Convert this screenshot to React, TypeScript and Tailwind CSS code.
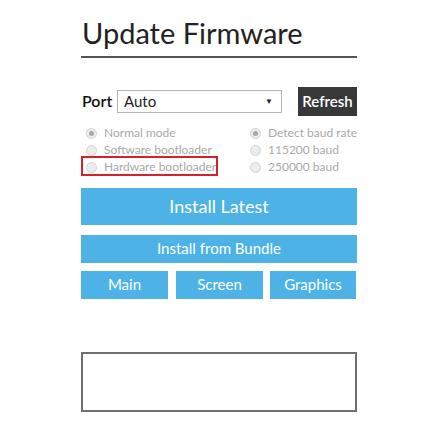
import React from "react";

function Radio({ label, checked }: { label: string; checked?: boolean }) {
  return (
    <div className="flex items-center h-[17px]">
      <span className="w-[11px] h-[11px] rounded-full border border-[#d4d4d4] bg-[#ececec] flex items-center justify-center">
        {checked && <span className="w-[5px] h-[5px] rounded-full bg-[#a8a8a8]" />}
      </span>
      <span className="ml-[7px] text-[12px] text-[#a9a9a9] leading-none whitespace-nowrap">{label}</span>
    </div>
  );
}

export default function App() {
  return (
    <div
      className="w-[444px] h-[444px] bg-white pl-[81px] pt-[14px]"
      style={{ fontFamily: 'Lato, "Open Sans", sans-serif' }}
    >
      <div className="w-[276px] flex flex-col">
        <h1 className="text-[29px] leading-[38px] text-[#222] pl-[1px]">Update Firmware</h1>
        <div className="h-[1.5px] bg-[#555] mt-[4px]" />

        {/* Port row */}
        <div className="flex items-center mt-[29px] h-[29px]">
          <span className="text-[16px] font-semibold text-[#111] w-[36px] pl-[1px]">Port</span>
          <div className="w-[165px] h-[23px] border border-[#b5b5b5] flex items-center justify-between px-[6px]">
            <span className="text-[15px] text-[#222]">Auto</span>
            <span className="text-[8px] text-[#222] mr-[2px]">▼</span>
          </div>
          <button className="ml-auto w-[59px] h-[29px] bg-[#383838] text-white text-[15px] font-semibold">Refresh</button>
        </div>

        {/* Mode / baud options */}
        <div className="flex mt-[9px]">
          <div className="flex flex-col w-[176px] pl-[5px]">
            <Radio label="Normal mode" checked />
            <Radio label="Software bootloader" />
            <div className="relative">
              <Radio label="Hardware bootloader" />
              <div className="absolute left-[-5px] top-[-3px] w-[137px] h-[20px] border-2 border-[#d6202c]" />
            </div>
          </div>
          <div className="flex flex-col">
            <Radio label="Detect baud rate" checked />
            <Radio label="115200 baud" />
            <Radio label="250000 baud" />
          </div>
        </div>

        {/* Install buttons */}
        <button className="mt-[12px] h-[37px] bg-[#4db3e6] text-white text-[18px]">Install Latest</button>
        <button className="mt-[10px] h-[28px] bg-[#4db3e6] text-white text-[15px]">Install from Bundle</button>
        <div className="mt-[8px] flex gap-[8px]">
          <button className="w-[87px] h-[28px] bg-[#4db3e6] text-white text-[15px]">Main</button>
          <button className="w-[87px] h-[28px] bg-[#4db3e6] text-white text-[15px]">Screen</button>
          <button className="w-[86px] h-[28px] bg-[#4db3e6] text-white text-[15px] ml-[-1px]">Graphics</button>
        </div>

        {/* Output box */}
        <div className="mt-[53px] h-[60px] border-2 border-[#6f6f6f]" />
      </div>
    </div>
  );
}
